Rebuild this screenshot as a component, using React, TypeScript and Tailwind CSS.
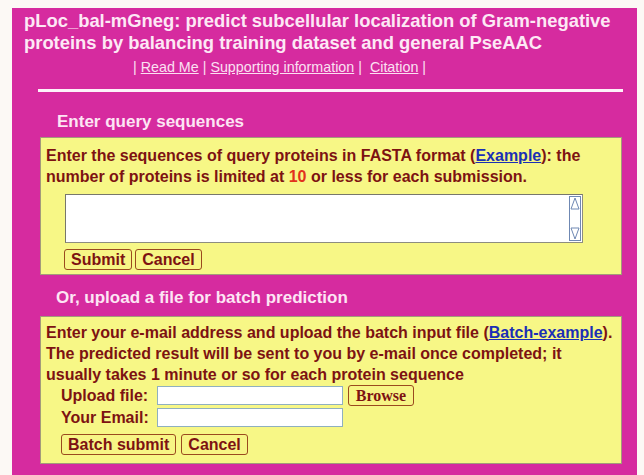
import React from "react";

const font = { fontFamily: '"Liberation Sans", Arial, Helvetica, sans-serif' };

function Btn({ children }: { children: React.ReactNode }) {
  return (
    <button
      type="button"
      className="h-[21px] rounded-[3px] border border-[#9a4a1e] bg-[#f7f585] px-[6px] text-[16px] font-bold leading-[19px] text-[#7d1212]"
    >
      {children}
    </button>
  );
}

function ScrollArrows() {
  return (
    <div className="flex h-full w-[12px] flex-col justify-between border border-[#6f88b3] bg-white">
      <svg width="10" height="13" viewBox="0 0 10 13" className="block">
        <path d="M1 12 L5 1 L9 12 Z" fill="none" stroke="#6f88b3" strokeWidth="1" />
      </svg>
      <svg width="10" height="13" viewBox="0 0 10 13" className="block">
        <path d="M1 1 L5 12 L9 1 Z" fill="none" stroke="#6f88b3" strokeWidth="1" />
      </svg>
    </div>
  );
}

export default function App() {
  return (
    <div className="h-[475px] w-[644px] overflow-hidden bg-[#fcf9f5] pl-[12px] pr-[7px] pt-[8px]" style={font}>
      <div className="flex h-full flex-col bg-[#d62b9f]">
        {/* page title */}
        <div className="whitespace-nowrap px-[12px] pt-[2px] text-[18.4px] font-bold leading-[22px] text-[#fde8f5]">
          pLoc_bal-mGneg: predict subcellular localization of Gram-negative
          <br />
          proteins by balancing training dataset and general PseAAC
        </div>
        <div className="ml-[121px] mt-[3px] whitespace-nowrap text-[14.3px] leading-[20px] text-[#fbe0f2]">
          | <a className="underline">Read Me</a> | <a className="underline">Supporting information</a> |&nbsp; <a className="underline">Citation</a> |
        </div>
        <div className="ml-[26px] mr-[14px] mt-[12px] h-[3px] bg-[#fdf2f9]" />

        {/* single submission */}
        <div className="ml-[45px] mt-[20px] text-[17px] font-bold leading-[20px] text-[#fde5f4]">Enter query sequences</div>
        <div className="ml-[28px] mr-[15px] mt-[5px] h-[138px] border border-[#a39a7a] bg-[#f7f786] px-[5px] pt-[7px] text-[16px] font-bold leading-[21px] text-[#7d1212]">
          <p className="whitespace-nowrap">
            Enter the sequences of query proteins in FASTA format (<a className="text-[#1b2fb5] underline">Example</a>): the
            <br />
            number of proteins is limited at <span className="text-[#e2321c]">10</span> or less for each submission.
          </p>
          <div className="ml-[19px] mt-[7px] flex h-[49px] w-[518px] border border-[#8d8d80] border-l-[#77776c] border-t-[#77776c] bg-white">
            <div className="flex-1" />
            <div className="mr-[1px] py-[1px]">
              <ScrollArrows />
            </div>
          </div>
          <div className="ml-[18px] mt-[6px] flex gap-[3px]">
            <Btn>Submit</Btn>
            <Btn>Cancel</Btn>
          </div>
        </div>

        {/* batch submission */}
        <div className="ml-[44px] mt-[13px] text-[17px] font-bold leading-[20px] text-[#fde5f4]">Or, upload a file for batch prediction</div>
        <div className="ml-[28px] mr-[15px] mt-[8px] h-[148px] border border-[#a39a7a] bg-[#f7f786] px-[5px] pt-[5px] text-[16px] font-bold leading-[21px] text-[#7d1212]">
          <p className="whitespace-nowrap">
            Enter your e-mail address and upload the batch input file (<a className="text-[#1b2fb5] underline">Batch-example</a>).
            <br />
            The predicted result will be sent to you by e-mail once completed; it
            <br />
            usually takes 1 minute or so for each protein sequence
          </p>
          <div className="ml-[15px] flex flex-col gap-[1px]">
            <div className="flex h-[21px] items-center">
              <span className="w-[96px] leading-[19px]">Upload file:</span>
              <div className="h-[19px] w-[186px] border border-[#8fb0bf] bg-white" />
              <button
                type="button"
                className="ml-[5px] h-[21px] w-[66px] rounded-[3px] border border-[#9a4a1e] bg-[#f7f585] text-[16px] font-bold leading-[19px] text-[#7d1212]"
                style={{ fontFamily: '"Liberation Serif", "Times New Roman", serif' }}
              >
                Browse
              </button>
            </div>
            <div className="flex h-[20px] items-center">
              <span className="w-[96px] leading-[19px]">Your Email:</span>
              <div className="h-[19px] w-[186px] border border-[#8fb0bf] bg-white" />
            </div>
          </div>
          <div className="ml-[15px] mt-[7px] flex gap-[5px]">
            <Btn>Batch submit</Btn>
            <Btn>Cancel</Btn>
          </div>
        </div>
      </div>
    </div>
  );
}
